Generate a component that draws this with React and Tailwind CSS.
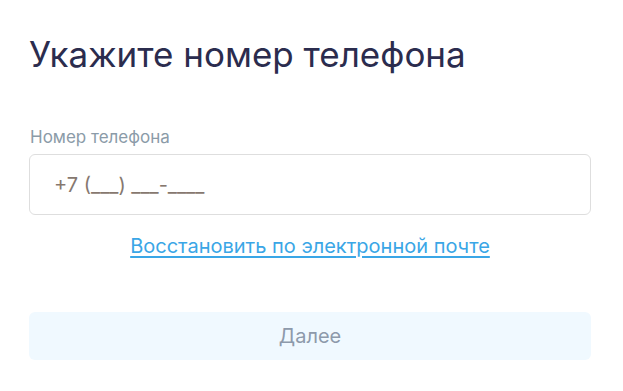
export default function App() {
  return (
    <div className="min-h-screen bg-white pl-[29px] pr-[32px] pt-[30px] font-['Inter',sans-serif]">
      <h1 className="text-[35px] leading-[48px] font-normal text-[#2b2c4e]">
        Укажите номер телефона
      </h1>

      <div className="mt-[48px]">
        <label className="block pl-px text-[17px] leading-[22px] text-[#8b9ba8]">
          Номер телефона
        </label>
        <input
          type="text"
          placeholder="+7 (___) ___-____"
          className="mt-[6px] h-[61px] w-full rounded-[6px] border border-[#dedede] px-[24px] text-[20px] text-[#333] outline-none placeholder:text-[#86786f]"
        />
      </div>

      <div className="mt-[17px] text-center">
        <a
          href="#"
          className="text-[20px] leading-[28px] text-[#3aa6e6] underline underline-offset-[3px]"
        >
          Восстановить по электронной почте
        </a>
      </div>

      <button
        type="button"
        disabled
        className="mt-[52px] h-[48px] w-full rounded-[6px] bg-[#f0f9ff] text-[20px] text-[#8d9aab]"
      >
        Далее
      </button>
    </div>
  );
}
